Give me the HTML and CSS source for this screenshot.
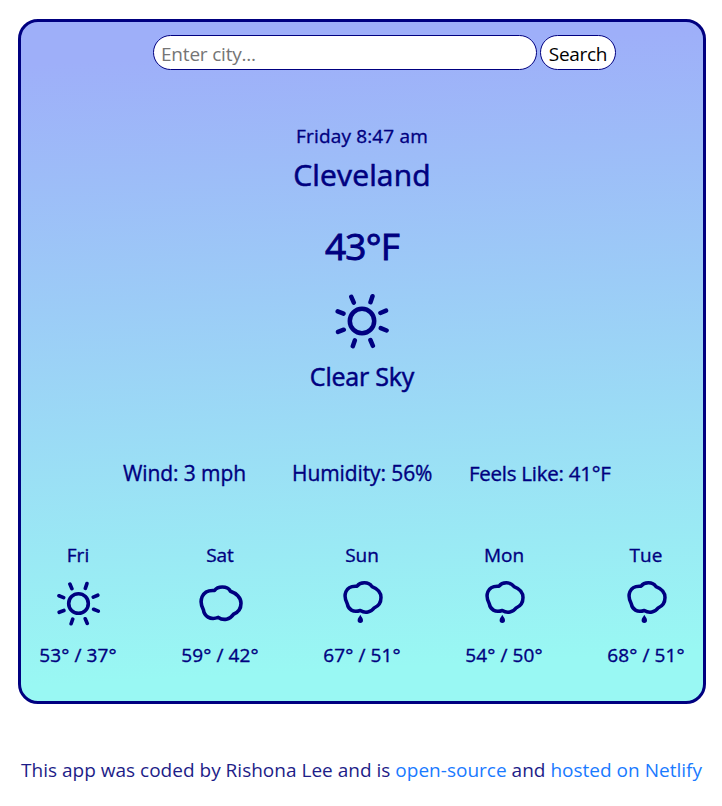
FILE: index.html
```html
<!DOCTYPE html>
<html lang="en">
<head>
<meta charset="utf-8">
<title>Weather</title>
<link rel="stylesheet" href="styles.css">
</head>
<body>
<svg class="symbols" aria-hidden="true">
  <symbol id="sun" viewBox="0 0 56 56">
    <circle cx="28" cy="28" r="12.2"/>
    <path d="M17.3 3.8l2.5 5.8M38.5 3.2l-2 6M3.7 18.4l5.8 2.3M46.4 20l5.6-2.3M4 38.9l5.8-2.2M46.8 35.2l5.8 2.3M20.8 47.4l-2 5.8M36.4 47l2.5 5.8"/>
  </symbol>
  <symbol id="cloud" viewBox="0 0 44 38">
    <path d="M15.5 6.5C18.5 2.2 28 1.4 31.5 7.2C37 9 42 13.5 42 19.3C42 24.5 39 28.5 34.5 30.2C31 35.5 24.5 37 19.3 33.4C11 36.5 5.2 32 4.4 25.8C-.2 17.5 2 5.5 15.5 6.5Z"/>
  </symbol>
  <symbol id="rain" viewBox="0 0 40 44">
    <path d="M14 6.2C17 2 25.5 1.3 29 6.6C34 8.5 38 12 38 17.6C38 22.5 35.4 26.2 31.3 27.8C28 32.4 22.2 33.6 17.3 30.5C10 32.8 5.3 29.5 4.2 23.6C0 15.8 1.8 5.2 14 6.2Z"/>
    <path class="drop" d="M17.3 34.8C18.3 37 20 38.4 20 40.2A2.7 2.7 0 0 1 14.6 40.2C14.6 38.4 16.4 37 17.3 34.8Z"/>
  </symbol>
</svg>
<main class="card">
  <form class="search">
    <input class="city-input" type="text" placeholder="Enter city...">
    <button class="search-button" type="button">Search</button>
  </form>
  <section class="current">
    <div class="date">Friday 8:47 am</div>
    <h1 class="city">Cleveland</h1>
    <div class="temperature">43°F</div>
    <svg class="icon current-icon"><use href="#sun"/></svg>
    <div class="description">Clear Sky</div>
  </section>
  <section class="details">
    <span class="wind">Wind: 3 mph</span>
    <span class="humidity">Humidity: 56%</span>
    <span class="feels">Feels Like: 41°F</span>
  </section>
  <section class="forecast">
    <div class="day"><span class="name">Fri</span><div class="picture"><svg class="icon sun"><use href="#sun"/></svg></div><span class="range">53° / 37°</span></div>
    <div class="day"><span class="name">Sat</span><div class="picture"><svg class="icon cloud"><use href="#cloud"/></svg></div><span class="range">59° / 42°</span></div>
    <div class="day"><span class="name">Sun</span><div class="picture"><svg class="icon rain"><use href="#rain"/></svg></div><span class="range">67° / 51°</span></div>
    <div class="day"><span class="name">Mon</span><div class="picture"><svg class="icon rain"><use href="#rain"/></svg></div><span class="range">54° / 50°</span></div>
    <div class="day"><span class="name">Tue</span><div class="picture"><svg class="icon rain"><use href="#rain"/></svg></div><span class="range">68° / 51°</span></div>
  </section>
</main>
<footer class="footer">This app was coded by Rishona Lee and is <a href="#">open-source</a> and <a href="#">hosted on Netlify</a></footer>
</body>
</html>
```

FILE: styles.css
```css
* { box-sizing: border-box; }

body {
  margin: 0;
  padding: 19px 16px 0 18px;
  background: #fff;
  color: #000080;
  font: 500 19px/30px "Open Sans", "Noto Sans", sans-serif;
}

.symbols { position: absolute; width: 0; height: 0; }

.card {
  width: 688px;
  height: 685px;
  padding-top: 13px;
  border: 3px solid #000080;
  border-radius: 20px;
  background: linear-gradient(177deg, #9eaff9 6%, #99f8f3 93%);
}

.search {
  display: flex;
  gap: 3px;
  padding-left: 132px;
}

.city-input,
.search-button {
  height: 35px;
  margin: 0;
  border: 1px solid #000080;
  border-radius: 18px;
  background: #fff;
  font: 400 19px/30px "Open Sans", "Noto Sans", sans-serif;
}

.city-input { width: 384px; padding: 2px 8px 0 7px; letter-spacing: -0.2px; }
.city-input::placeholder { color: #757575; opacity: 1; }
.search-button { width: 76px; padding: 2px 0 0; color: #000; letter-spacing: -0.3px; }

.current {
  display: flex;
  flex-direction: column;
  align-items: center;
  margin-top: 51px;
}

.current,
.details,
.forecast { -webkit-text-stroke: 0.35px #000080; }

.date { letter-spacing: 0.15px; }
.city { margin: 4px 0 0; font-size: 30px; font-weight: 500; line-height: 40px; letter-spacing: 0.15px; -webkit-text-stroke-width: 0.6px; }
.temperature { margin-top: 26px; font-size: 37px; line-height: 50px; letter-spacing: -0.8px; -webkit-text-stroke-width: 0.9px; }
.current-icon { width: 56px; height: 56px; margin-top: 22px; }
.description { margin-top: 10px; font-size: 25px; line-height: 34px; letter-spacing: -0.2px; -webkit-text-stroke-width: 0.5px; }

.icon {
  display: block;
  overflow: visible;
  fill: none;
  stroke: #000080;
  stroke-width: 4.5;
  stroke-linecap: round;
  stroke-linejoin: round;
}

.drop { fill: #000080; stroke: none; }

.details {
  display: grid;
  grid-template-columns: 169px 177px auto;
  margin: 64px 0 0 102px;
  font-size: 21px;
  line-height: 32px;
  letter-spacing: -0.1px;
  white-space: nowrap;
}

.feels { font-size: 20.5px; letter-spacing: -0.25px; }

.forecast {
  display: grid;
  grid-template-columns: repeat(5, 142px);
  margin: 51px -14px 0;
}

.day { display: flex; flex-direction: column; align-items: center; }
.range { letter-spacing: 0.1px; }
.picture { height: 70px; padding-top: 10px; }
.sun { width: 45px; height: 45px; margin: 1px 0 0 1px; }
.cloud { width: 44px; height: 38px; margin: 4px 0 0 2px; stroke-width: 3.6; }
.rain { width: 40px; height: 44px; margin-left: 2px; stroke-width: 3.5; }

.footer {
  margin: 51px 0 0 3px;
  color: #1d1d88;
  font-size: 19px;
  font-weight: 400;
  letter-spacing: 0.01px;
  white-space: nowrap;
}

.footer a { color: #1a7aff; text-decoration: none; }
```
